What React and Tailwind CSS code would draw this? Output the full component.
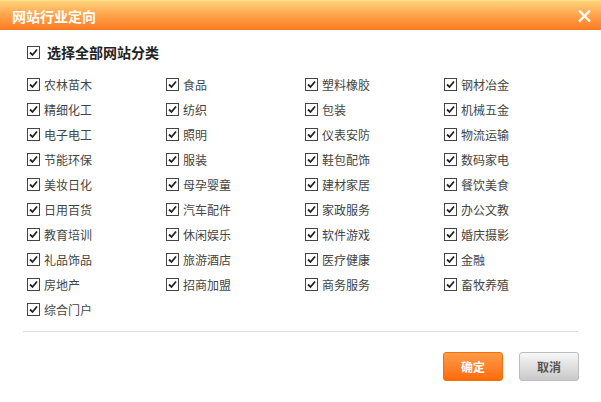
import React, { useState } from "react";

const CATS = [
  "农林苗木", "食品", "塑料橡胶", "钢材冶金",
  "精细化工", "纺织", "包装", "机械五金",
  "电子电工", "照明", "仪表安防", "物流运输",
  "节能环保", "服装", "鞋包配饰", "数码家电",
  "美妆日化", "母孕婴童", "建材家居", "餐饮美食",
  "日用百货", "汽车配件", "家政服务", "办公文教",
  "教育培训", "休闲娱乐", "软件游戏", "婚庆摄影",
  "礼品饰品", "旅游酒店", "医疗健康", "金融",
  "房地产", "招商加盟", "商务服务", "畜牧养殖",
  "综合门户",
];

function Box({ checked, onClick }) {
  return (
    <span
      onClick={onClick}
      className="w-[13px] h-[13px] border border-[#444] bg-white flex items-center justify-center shrink-0 cursor-pointer"
    >
      {checked && (
        <svg width="9" height="9" viewBox="0 0 9 9">
          <path d="M1 4.5 L3.5 7 L8 1.5" fill="none" stroke="#222" strokeWidth="1.8" />
        </svg>
      )}
    </span>
  );
}

export default function App() {
  const [checked, setChecked] = useState(CATS.map(() => true));
  const all = checked.every(Boolean);

  const toggle = (i) =>
    setChecked((c) => c.map((v, j) => (j === i ? !v : v)));

  return (
    <div
      className="w-[601px] h-[402px] bg-white overflow-hidden"
      style={{ fontFamily: '"Noto Sans CJK SC", "Liberation Sans", sans-serif' }}
    >
      {/* Header */}
      <div className="h-[30px] flex items-center justify-between pl-[12px] pr-[9px] bg-gradient-to-b from-[#ffd27a] via-[#ffa24a] to-[#ff7a1e] border-t border-[#f9e08a]">
        <span className="text-white text-[14px] font-bold leading-none">网站行业定向</span>
        <svg width="15" height="14" viewBox="0 0 15 14">
          <path d="M2 1.5 L13 12.5 M13 1.5 L2 12.5" stroke="#fff" strokeWidth="2.4" />
        </svg>
      </div>

      {/* Select all */}
      <div className="flex items-center gap-[7px] pl-[27px] mt-[15px] h-[14px]">
        <Box checked={all} onClick={() => setChecked(CATS.map(() => !all))} />
        <span className="text-[14px] font-bold text-[#222] leading-none">选择全部网站分类</span>
      </div>

      {/* Grid */}
      <div className="grid grid-cols-[139px_139px_139px_139px] pl-[27px] mt-[13px]">
        {CATS.map((c, i) => (
          <label key={c} className="h-[25px] flex items-center gap-[4px] text-[12px] text-[#444] cursor-pointer">
            <Box checked={checked[i]} onClick={() => toggle(i)} />
            <span className="leading-none">{c}</span>
          </label>
        ))}
      </div>

      {/* Divider */}
      <div className="mx-[23px] mt-[9px] border-t border-[#dcdcdc]" />

      {/* Buttons */}
      <div className="flex justify-end gap-[16px] pr-[22px] mt-[20px]">
        <button className="w-[60px] h-[29px] rounded-[3px] bg-gradient-to-b from-[#ff9b45] to-[#ff6a00] border border-[#f07010] text-white text-[12px] font-bold">
          确定
        </button>
        <button className="w-[60px] h-[29px] rounded-[3px] bg-gradient-to-b from-[#f7f7f7] to-[#c9c9c9] border border-[#bdbdbd] text-[#555] text-[12px] font-bold">
          取消
        </button>
      </div>
    </div>
  );
}
